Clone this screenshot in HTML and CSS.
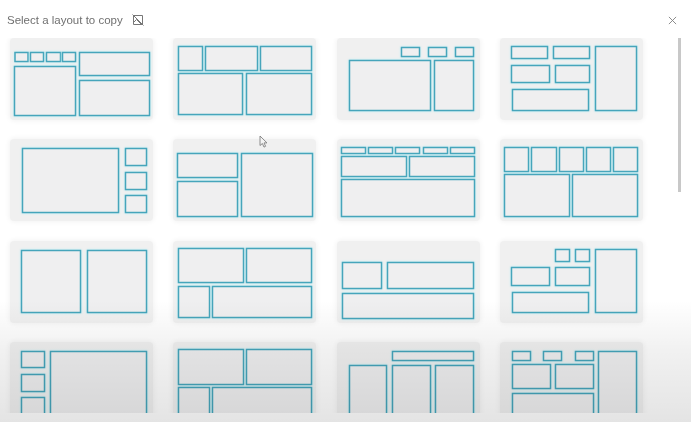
FILE: index.html
```html
<!DOCTYPE html>
<html lang="en">
<head>
<meta charset="utf-8">
<title>Select a layout to copy</title>
<link rel="stylesheet" href="styles.css">
</head>
<body>
<main class="dialog">
  <header class="head">
    <h1 class="title">Select a layout to copy</h1>
    <svg class="no-image" viewBox="0 0 12 12" aria-hidden="true">
      <path d="M1.5 1.5h9v9h-9z"/>
      <path d="M1.5 8.5l3-3 5 5"/>
      <path d="M0.5 0.5l11 11"/>
    </svg>
    <svg class="close" viewBox="0 0 10 10" aria-label="Close"><path d="M1 1l8 8M9 1l-8 8"/></svg>
  </header>
  <div class="body">
    <div class="grid">
      <svg class="thumb" viewBox="0 0 143 82">
        <rect x="5" y="14.5" width="13" height="9"/><rect x="20.5" y="14.5" width="13" height="9"/><rect x="36.5" y="14.5" width="14" height="9"/><rect x="52.5" y="14.5" width="13" height="9"/>
        <rect x="4.5" y="28.5" width="61" height="49"/><rect x="69.5" y="14.5" width="70" height="23"/><rect x="69.5" y="42.5" width="70" height="35"/>
      </svg>
      <svg class="thumb" viewBox="0 0 143 82">
        <rect x="5.5" y="8.5" width="24" height="24"/><rect x="32.5" y="8.5" width="52" height="24"/><rect x="87.5" y="8.5" width="51" height="24"/>
        <rect x="5.5" y="35.5" width="64" height="41"/><rect x="73.5" y="35.5" width="65" height="41"/>
      </svg>
      <svg class="thumb" viewBox="0 0 143 82">
        <rect x="64.5" y="9.5" width="18" height="9"/><rect x="91.5" y="9.5" width="18" height="9"/><rect x="118.5" y="9.5" width="18" height="9"/>
        <rect x="12.5" y="22.5" width="81" height="50"/><rect x="97.5" y="22.5" width="39" height="50"/>
      </svg>
      <svg class="thumb" viewBox="0 0 143 82">
        <rect x="11.5" y="8.5" width="36" height="12"/><rect x="53.5" y="8.5" width="36" height="12"/>
        <rect x="11.5" y="27.5" width="38" height="17"/><rect x="55.5" y="27.5" width="34" height="17"/>
        <rect x="12.5" y="51.5" width="76" height="21"/><rect x="95.5" y="8.5" width="41" height="64"/>
      </svg>

      <svg class="thumb" viewBox="0 0 143 82">
        <rect x="12.5" y="9.5" width="96" height="64"/>
        <rect x="115.5" y="9.5" width="21" height="17"/><rect x="115.5" y="33.5" width="21" height="17"/><rect x="115.5" y="56.5" width="21" height="17"/>
      </svg>
      <svg class="thumb" viewBox="0 0 143 82">
        <rect x="4.5" y="14.5" width="60" height="24"/><rect x="4.5" y="42.5" width="60" height="35"/><rect x="68.5" y="14.5" width="71" height="63"/>
      </svg>
      <svg class="thumb" viewBox="0 0 143 82">
        <rect x="4.5" y="8.5" width="24" height="6"/><rect x="31.5" y="8.5" width="24" height="6"/><rect x="58.5" y="8.5" width="24" height="6"/><rect x="86.5" y="8.5" width="24" height="6"/><rect x="113.5" y="8.5" width="24" height="6"/>
        <rect x="4.5" y="17.5" width="65" height="20"/><rect x="72.5" y="17.5" width="65" height="20"/><rect x="4.5" y="40.5" width="133" height="37"/>
      </svg>
      <svg class="thumb" viewBox="0 0 143 82">
        <rect x="4.5" y="8.5" width="24" height="24"/><rect x="31.5" y="8.5" width="25" height="24"/><rect x="59.5" y="8.5" width="24" height="24"/><rect x="86.5" y="8.5" width="24" height="24"/><rect x="113.5" y="8.5" width="24" height="24"/>
        <rect x="4.5" y="35.5" width="65" height="42"/><rect x="72.5" y="35.5" width="65" height="42"/>
      </svg>

      <svg class="thumb" viewBox="0 0 143 82">
        <rect x="11.5" y="9.5" width="59" height="62"/><rect x="77.5" y="9.5" width="59" height="62"/>
      </svg>
      <svg class="thumb" viewBox="0 0 143 82">
        <rect x="5.5" y="7.5" width="65" height="34"/><rect x="73.5" y="7.5" width="65" height="34"/>
        <rect x="5.5" y="45.5" width="31" height="31"/><rect x="39.5" y="45.5" width="99" height="31"/>
      </svg>
      <svg class="thumb" viewBox="0 0 143 82">
        <rect x="5.5" y="21.5" width="39" height="26"/><rect x="50.5" y="21.5" width="86" height="26"/><rect x="5.5" y="52.5" width="131" height="25"/>
      </svg>
      <svg class="thumb" viewBox="0 0 143 82">
        <rect x="55.5" y="8.5" width="14" height="12"/><rect x="75.5" y="8.5" width="14" height="12"/>
        <rect x="11.5" y="26.5" width="38" height="18"/><rect x="55.5" y="26.5" width="34" height="18"/>
        <rect x="12.5" y="51.5" width="76" height="20"/><rect x="95.5" y="8.5" width="41" height="63"/>
      </svg>

      <svg class="thumb" viewBox="0 0 143 82">
        <rect x="11.5" y="9.5" width="23" height="16"/><rect x="11.5" y="32.5" width="23" height="17"/><rect x="11.5" y="55.5" width="23" height="18"/>
        <rect x="40.5" y="9.5" width="96" height="64"/>
      </svg>
      <svg class="thumb" viewBox="0 0 143 82">
        <rect x="5.5" y="7.5" width="65" height="35"/><rect x="73.5" y="7.5" width="65" height="35"/>
        <rect x="5.5" y="45.5" width="31" height="31"/><rect x="39.5" y="45.5" width="99" height="31"/>
      </svg>
      <svg class="thumb" viewBox="0 0 143 82">
        <rect x="55.5" y="9.5" width="81" height="9"/>
        <rect x="12.5" y="23.5" width="37" height="55"/><rect x="55.5" y="23.5" width="38" height="55"/><rect x="98.5" y="23.5" width="38" height="55"/>
      </svg>
      <svg class="thumb" viewBox="0 0 143 82">
        <rect x="12.5" y="9.5" width="18" height="9"/><rect x="43.5" y="9.5" width="18" height="9"/><rect x="75.5" y="9.5" width="18" height="9"/>
        <rect x="12.5" y="22.5" width="38" height="24"/><rect x="55.5" y="22.5" width="38" height="24"/>
        <rect x="12.5" y="51.5" width="81" height="30"/><rect x="98.5" y="9.5" width="38" height="70"/>
      </svg>
    </div>
    <div class="scrollbar"></div>
  </div>
  <div class="foot"></div>
  <div class="fade"></div>
  <svg class="cursor" viewBox="0 0 10 13" aria-hidden="true"><path d="M1 1v9.5l2.4-2 1.6 3.6 1.6-.8-1.6-3.4h3z"/></svg>
</main>
</body>
</html>
```

FILE: styles.css
```css
* { box-sizing: border-box; }
html, body { margin: 0; padding: 0; background: #fff; }
body { overflow: hidden; }

.dialog {
  position: relative;
  width: 691px;
  height: 422px;
  display: flex;
  flex-direction: column;
  overflow: hidden;
  font-family: "Liberation Sans", Arial, sans-serif;
}

.head {
  flex: 0 0 38px;
  display: flex;
  align-items: center;
  padding: 2px 14px 0 7px;
}
.title {
  margin: 0;
  font-size: 11.5px;
  font-weight: 400;
  color: #707070;
  filter: blur(0.3px);
}
.no-image {
  width: 12px;
  height: 12px;
  margin-left: 9px;
  fill: none;
  stroke: #777;
  stroke-width: 1;
  filter: blur(0.25px);
}
.close {
  width: 9px;
  height: 9px;
  margin-left: auto;
  fill: none;
  stroke: #808080;
  stroke-width: 1;
  filter: blur(0.2px);
}

.body {
  flex: 1;
  min-height: 0;
  display: flex;
  align-items: flex-start;
  padding-left: 10px;
  overflow: hidden;
}
.grid {
  display: grid;
  grid-template-columns: repeat(4, 143px);
  grid-auto-rows: 82px;
  column-gap: 20.33px;
  row-gap: 19.33px;
  flex: none;
}
.thumb {
  display: block;
  width: 143px;
  height: 82px;
  background: #f0f0f0;
  border-radius: 4px;
  box-shadow: 0 0 5px 1px #f3f3f3;
  overflow: hidden;
}
.thumb rect {
  fill: #efeff0;
  stroke: #46a5bb;
  stroke-width: 1.5;
  filter: drop-shadow(0 0 1px #b0eef6);
}
.scrollbar {
  flex: none;
  width: 3px;
  height: 154px;
  margin-left: 35px;
  background: #c8c8c8;
  filter: blur(0.3px);
}
.foot { flex: 0 0 9px; background: #fff; }

.fade {
  position: absolute;
  left: 0;
  right: 0;
  top: 300px;
  bottom: 0;
  background: linear-gradient(to bottom, rgba(0,0,0,0), rgba(0,0,0,.055) 50px, rgba(0,0,0,.105) 122px);
  pointer-events: none;
}
.cursor {
  position: absolute;
  left: 259px;
  top: 135px;
  width: 10px;
  height: 13px;
  fill: #f4f4f4;
  stroke: #808080;
  stroke-width: .9;
}
```
